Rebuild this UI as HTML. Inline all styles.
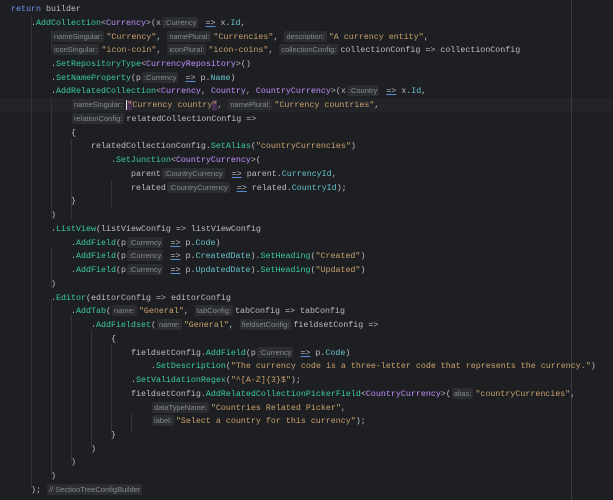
<!DOCTYPE html>
<html><head><meta charset="utf-8"><style>
html,body{margin:0;padding:0;background:#1e1f22;width:613px;height:500px;overflow:hidden}
.l{position:absolute;left:11px;height:14px;line-height:14px;white-space:pre;font-family:"Liberation Mono",monospace;font-size:8.33px;color:#bcbec4}
.k{color:#6c95eb}.m{color:#39cc9b}.t{color:#c191ff}.s{color:#c9a26d}.p{color:#66c3cc}
.h{font-family:"Liberation Sans",sans-serif;font-size:7.5px;color:#868a91;background:#2b2d30;border-radius:2px;padding:1px 2px;margin-right:2px;margin-left:1px}
.u{text-decoration:underline;text-decoration-color:#5a8fd8}
.g{position:absolute;width:1px;background:#313438}
.cur{position:absolute;left:0;width:613px;background:#232428}
</style></head><body>
<div class="cur" style="top:98px;height:14px"></div>
<div style="position:absolute;left:571px;top:0;width:1px;height:500px;background:#393b40"></div>
<div class="g" style="left:31px;top:16px;height:472px"></div>
<div class="g" style="left:51px;top:30px;height:20px"></div>
<div class="g" style="left:51px;top:98px;height:120px"></div>
<div class="g" style="left:71px;top:139px;height:80px"></div>
<div class="g" style="left:111px;top:180px;height:27px"></div>
<div class="g" style="left:51px;top:248px;height:40px"></div>
<div class="g" style="left:51px;top:300px;height:175px"></div>
<div class="g" style="left:71px;top:315px;height:147px"></div>
<div class="g" style="left:91px;top:330px;height:118px"></div>
<div class="g" style="left:111px;top:344px;height:90px"></div>
<div class="g" style="left:131px;top:412px;height:20px"></div>

<div class="l" style="top:2px"><span class="k">return</span> builder</div>
<div class="l" style="top:15.7px">    .<span class="m">AddCollection</span>&lt;<span class="t">Currency</span>&gt;(x<span class="h">:Currency</span> <span class="u">=&gt;</span> x.<span class="p">Id</span>,</div>
<div class="l" style="top:29.5px">        <span class="h">nameSingular:</span><span class="s">"Currency"</span>, <span class="h">namePlural:</span><span class="s">"Currencies"</span>, <span class="h">description:</span><span class="s">"A currency entity"</span>,</div>
<div class="l" style="top:43.2px">        <span class="h">iconSingular:</span><span class="s">"icon-coin"</span>, <span class="h">iconPlural:</span><span class="s">"icon-coins"</span>, <span class="h">collectionConfig:</span>collectionConfig =&gt; collectionConfig</div>
<div class="l" style="top:57px">        .<span class="m">SetRepositoryType</span>&lt;<span class="t">CurrencyRepository</span>&gt;()</div>
<div class="l" style="top:70.7px">        .<span class="m">SetNameProperty</span>(p<span class="h">:Currency</span> <span class="u">=&gt;</span> p.<span class="p">Name</span>)</div>
<div class="l" style="top:84.4px">        .<span class="m">AddRelatedCollection</span>&lt;<span class="t">Currency</span>, <span class="t">Country</span>, <span class="t">CountryCurrency</span>&gt;(x<span class="h">:Country</span> <span class="u">=&gt;</span> x.<span class="p">Id</span>,</div>
<div class="l" style="top:98.2px">            <span class="h">nameSingular:</span><span class="s"><span style="border-left:1px solid #ddd;background:#4a2f55">"</span>Currency country<span style="background:#4a2f55">"</span></span>, <span class="h">namePlural:</span><span class="s">"Currency countries"</span>,</div>
<div class="l" style="top:111.9px">            <span class="h">relationConfig:</span>relatedCollectionConfig =&gt;</div>
<div class="l" style="top:125.7px">            {</div>
<div class="l" style="top:139.4px">                relatedCollectionConfig.<span class="m">SetAlias</span>(<span class="s">"countryCurrencies"</span>)</div>
<div class="l" style="top:153.1px">                    .<span class="m">SetJunction</span>&lt;<span class="t">CountryCurrency</span>&gt;(</div>
<div class="l" style="top:166.9px">                        parent<span class="h">:CountryCurrency</span> <span class="u">=&gt;</span> parent.<span class="p">CurrencyId</span>,</div>
<div class="l" style="top:180.6px">                        related<span class="h">:CountryCurrency</span> <span class="u">=&gt;</span> related.<span class="p">CountryId</span>);</div>
<div class="l" style="top:194.4px">            }</div>
<div class="l" style="top:208.1px">        )</div>
<div class="l" style="top:221.8px">        .<span class="m">ListView</span>(listViewConfig =&gt; listViewConfig</div>
<div class="l" style="top:235.6px">            .<span class="m">AddField</span>(p<span class="h">:Currency</span> <span class="u">=&gt;</span> p.<span class="p">Code</span>)</div>
<div class="l" style="top:249.3px">            .<span class="m">AddField</span>(p<span class="h">:Currency</span> <span class="u">=&gt;</span> p.<span class="p">CreatedDate</span>).<span class="m">SetHeading</span>(<span class="s">"Created"</span>)</div>
<div class="l" style="top:263.1px">            .<span class="m">AddField</span>(p<span class="h">:Currency</span> <span class="u">=&gt;</span> p.<span class="p">UpdatedDate</span>).<span class="m">SetHeading</span>(<span class="s">"Updated"</span>)</div>
<div class="l" style="top:276.8px">        )</div>
<div class="l" style="top:290.5px">        .<span class="m">Editor</span>(editorConfig =&gt; editorConfig</div>
<div class="l" style="top:304.3px">            .<span class="m">AddTab</span>(<span class="h">name:</span><span class="s">"General"</span>, <span class="h">tabConfig:</span>tabConfig =&gt; tabConfig</div>
<div class="l" style="top:318px">                .<span class="m">AddFieldset</span>(<span class="h">name:</span><span class="s">"General"</span>, <span class="h">fieldsetConfig:</span>fieldsetConfig =&gt;</div>
<div class="l" style="top:331.8px">                    {</div>
<div class="l" style="top:345.5px">                        fieldsetConfig.<span class="m">AddField</span>(p<span class="h">:Currency</span> <span class="u">=&gt;</span> p.<span class="p">Code</span>)</div>
<div class="l" style="top:359.2px">                            .<span class="m">SetDescription</span>(<span class="s">"The currency code is a three-letter code that represents the currency."</span>)</div>
<div class="l" style="top:373px">                        .<span class="m">SetValidationRegex</span>(<span class="s">"^[A-Z]{3}$"</span>);</div>
<div class="l" style="top:386.7px">                        fieldsetConfig.<span class="m">AddRelatedCollectionPickerField</span>&lt;<span class="t">CountryCurrency</span>&gt;(<span class="h">alias:</span><span class="s">"countryCurrencies"</span>,</div>
<div class="l" style="top:400.5px">                            <span class="h">dataTypeName:</span><span class="s">"Countries Related Picker"</span>,</div>
<div class="l" style="top:414.2px">                            <span class="h">label:</span><span class="s">"Select a country for this currency"</span>);</div>
<div class="l" style="top:427.9px">                    }</div>
<div class="l" style="top:441.7px">                )</div>
<div class="l" style="top:455.4px">            )</div>
<div class="l" style="top:469.2px">        )</div>
<div class="l" style="top:482.9px">    ); <span class="h">// SectionTreeConfigBuilder</span></div>
</body></html>
